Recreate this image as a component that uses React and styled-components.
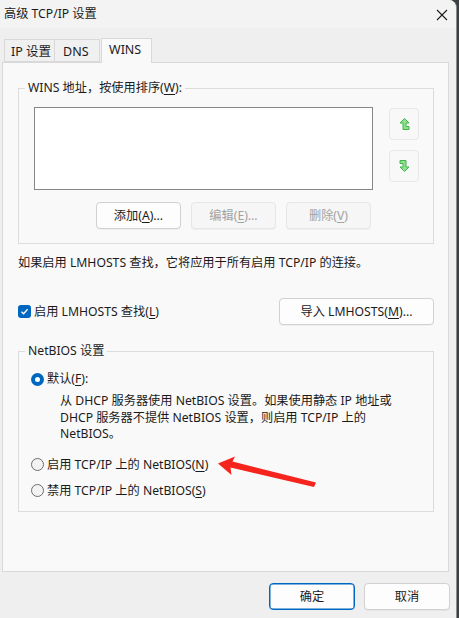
import styled, { createGlobalStyle } from "styled-components";

const GlobalStyle = createGlobalStyle`
  html, body {
    margin: 0;
    padding: 0;
    background: #3b3f46;
    overflow: hidden;
  }
  body {
    font-family: "Noto Sans", "Noto Sans CJK SC", sans-serif;
    font-size: 12.2px;
    color: #1b1b1b;
  }
  u {
    text-underline-offset: 2px;
  }
`;

const Window = styled.div`
  position: relative;
  width: 456px;
  height: 640px;
  background: #efefef;
  border-right: 1px solid #8a8a8a;
  border-top-right-radius: 8px;
  overflow: hidden;
  display: flex;
  flex-direction: column;
`;

const TitleBar = styled.div`
  height: 28px;
  flex: none;
  background: #f3f3f3;
  display: flex;
  align-items: center;
  justify-content: space-between;
  padding: 0 8px 0 4px;
  line-height: 16px;
`;

const CloseButton = styled.span`
  display: flex;
  width: 12px;
  height: 12px;
  margin-top: 1px;
`;

const TabStrip = styled.div`
  display: flex;
  align-items: flex-end;
  height: 24px;
  margin-top: 10px;
  padding-left: 4px;
`;

const Tab = styled.div`
  position: relative;
  box-sizing: border-box;
  width: ${(p) => p.$w}px;
  height: ${(p) => (p.$active ? 25 : 23)}px;
  padding: ${(p) => (p.$active ? "3px 0 0 7px" : `4px 0 0 ${p.$pl || 6}px`)};
  margin-bottom: ${(p) => (p.$active ? -1 : 0)}px;
  margin-left: ${(p) => (p.$active ? 1 : 0)}px;
  background: ${(p) => (p.$active ? "#f9f9f9" : "#f0f0f0")};
  border: 1px solid #d9d9d9;
  border-bottom: ${(p) => (p.$active ? "none" : "1px solid #d9d9d9")};
  border-right: ${(p) => (p.$last || p.$active ? "1px solid #d9d9d9" : "none")};
  z-index: ${(p) => (p.$active ? 2 : 1)};
  line-height: 16px;
  font-size: 12.5px;
`;

const Panel = styled.div`
  box-sizing: border-box;
  width: 447px;
  height: 510px;
  margin-left: 2px;
  background: #f9f9f9;
  border: 1px solid #d9d9d9;
  padding: 0 14px 0 15px;
  display: flex;
  flex-direction: column;
`;

const Group = styled.fieldset`
  margin: ${(p) => p.$top}px 0 0 0;
  padding: 0;
  border: 1px solid #dcdcdc;
  min-width: 0;
`;

const Legend = styled.legend`
  margin-left: 6px;
  padding: 0 3px;
  line-height: 16px;
`;

const GroupBody = styled.div`
  padding: ${(p) => p.$pad};
`;

const WinsGrid = styled.div`
  display: grid;
  grid-template-columns: 339px 30px;
  column-gap: 16px;
  row-gap: 12px;
`;

const ListBox = styled.div`
  height: 83px;
  box-sizing: border-box;
  background: #ffffff;
  border: 1px solid #878787;
`;

const OrderColumn = styled.div`
  display: flex;
  flex-direction: column;
  gap: 10px;
  padding-top: 1px;
`;

const IconButton = styled.div`
  box-sizing: border-box;
  width: 30px;
  height: 32px;
  border: 1px solid #e8e8e8;
  border-radius: 4px;
  background: #f8f8f8;
  display: flex;
  align-items: center;
  justify-content: center;
`;

const ButtonRow = styled.div`
  display: flex;
  justify-content: flex-end;
  gap: 10px;
  padding-right: 2px;
`;

const Button = styled.div`
  box-sizing: border-box;
  width: ${(p) => p.$w || 85}px;
  height: 27px;
  border-radius: 4px;
  display: flex;
  align-items: center;
  justify-content: center;
  line-height: 16px;
  background: ${(p) => (p.$disabled ? "#f6f6f6" : "#fdfdfd")};
  color: ${(p) => (p.$disabled ? "#a2a2a2" : "#1b1b1b")};
  border: 1px solid
    ${(p) => (p.$primary ? "#0067c0" : p.$disabled ? "#e6e6e6" : "#d1d1d1")};
  box-shadow: ${(p) =>
    p.$primary ? "inset 0 0 0 0.5px #0067c0" : "0 1px 0 rgba(0,0,0,0.04)"};
`;

const InfoText = styled.div`
  margin-top: 11px;
  line-height: 16px;
  white-space: nowrap;
`;

const CheckRow = styled.div`
  margin-top: 27px;
  display: flex;
  align-items: center;
  justify-content: space-between;
`;

const CheckLabel = styled.label`
  display: flex;
  align-items: center;
  gap: 3px;
  line-height: 16px;
`;

const CheckBox = styled.span`
  width: 13px;
  height: 13px;
  border-radius: 3px;
  background: #0067c0;
  display: flex;
  align-items: center;
  justify-content: center;
`;

const RadioRow = styled.div`
  display: flex;
  align-items: center;
  gap: 3px;
  line-height: 16px;
  margin-top: ${(p) => p.$top || 0}px;
`;

const Radio = styled.span`
  box-sizing: border-box;
  flex: none;
  width: 13px;
  height: 13px;
  border-radius: 50%;
  display: flex;
  align-items: center;
  justify-content: center;
  background: ${(p) => (p.$checked ? "#0067c0" : "#f3f3f3")};
  border: ${(p) => (p.$checked ? "none" : "1px solid #6e6e6e")};

  &::after {
    content: "";
    display: ${(p) => (p.$checked ? "block" : "none")};
    width: 5px;
    height: 5px;
    border-radius: 50%;
    background: #ffffff;
  }
`;

const Description = styled.div`
  margin-top: 6px;
  padding-left: 29px;
  line-height: 16.5px;
  white-space: nowrap;
`;

const Footer = styled.div`
  display: flex;
  justify-content: flex-end;
  gap: 9px;
  margin-top: 11px;
  padding-right: 6px;
`;

const Callout = styled.svg`
  position: absolute;
  left: 214px;
  top: 452px;
  width: 106px;
  height: 40px;
`;

function UpIcon() {
  return (
    <svg width="11" height="12" viewBox="0 0 11 12">
      <polygon
        points="5.5,0.5 10,5 7,5 7,8.5 10,8.5 10,11.5 4,11.5 4,5 1,5"
        fill="#8fe08f"
        stroke="#41b54b"
        strokeWidth="1"
      />
    </svg>
  );
}

function DownIcon() {
  return (
    <svg width="11" height="12" viewBox="0 0 11 12">
      <polygon
        points="1,0.5 7,0.5 7,7 10,7 5.5,11.5 1,7 4,7 4,3.5 1,3.5"
        fill="#8fe08f"
        stroke="#41b54b"
        strokeWidth="1"
      />
    </svg>
  );
}

export default function App() {
  return (
    <>
      <GlobalStyle />
      <Window>
        <TitleBar>
          <span>高级 TCP/IP 设置</span>
          <CloseButton>
            <svg width="12" height="12" viewBox="0 0 12 12">
              <path d="M1 1 L11 11 M11 1 L1 11" stroke="#1b1b1b" strokeWidth="1.1" />
            </svg>
          </CloseButton>
        </TitleBar>

        <TabStrip>
          <Tab $w={50}>IP 设置</Tab>
          <Tab $w={46} $pl={8} $last>
            DNS
          </Tab>
          <Tab $w={51} $active>
            WINS
          </Tab>
        </TabStrip>

        <Panel>
          <Group $top={17}>
            <Legend>
              WINS 地址，按使用排序(<u>W</u>):
            </Legend>
            <GroupBody $pad="11px 14px 14px 15px">
              <WinsGrid>
                <ListBox />
                <OrderColumn>
                  <IconButton>
                    <UpIcon />
                  </IconButton>
                  <IconButton>
                    <DownIcon />
                  </IconButton>
                </OrderColumn>
                <ButtonRow>
                  <Button>
                    <span>
                      添加(<u>A</u>)...
                    </span>
                  </Button>
                  <Button $disabled>
                    <span>
                      编辑(<u>E</u>)...
                    </span>
                  </Button>
                  <Button $disabled>
                    <span>
                      删除(<u>V</u>)
                    </span>
                  </Button>
                </ButtonRow>
              </WinsGrid>
            </GroupBody>
          </Group>

          <InfoText>如果启用 LMHOSTS 查找，它将应用于所有启用 TCP/IP 的连接。</InfoText>

          <CheckRow>
            <CheckLabel>
              <CheckBox>
                <svg width="9" height="9" viewBox="0 0 9 9">
                  <path d="M1.5 4.8 L3.6 6.8 L7.6 2.2" fill="none" stroke="#fff" strokeWidth="1.3" />
                </svg>
              </CheckBox>
              <span>
                启用 LMHOSTS 查找(<u>L</u>)
              </span>
            </CheckLabel>
            <Button $w={155}>
              <span>
                导入 LMHOSTS(<u>M</u>)...
              </span>
            </Button>
          </CheckRow>

          <Group $top={18}>
            <Legend>NetBIOS 设置</Legend>
            <GroupBody $pad="12px 12px 12px 12px">
              <RadioRow>
                <Radio $checked />
                <span>
                  默认(<u>F</u>):
                </span>
              </RadioRow>
              <Description>
                从 DHCP 服务器使用 NetBIOS 设置。如果使用静态 IP 地址或
                <br />
                DHCP 服务器不提供 NetBIOS 设置，则启用 TCP/IP 上的
                <br />
                NetBIOS。
              </Description>
              <RadioRow $top={14}>
                <Radio />
                <span>
                  启用 TCP/IP 上的 NetBIOS(<u>N</u>)
                </span>
              </RadioRow>
              <RadioRow $top={10}>
                <Radio />
                <span>
                  禁用 TCP/IP 上的 NetBIOS(<u>S</u>)
                </span>
              </RadioRow>
            </GroupBody>
          </Group>
        </Panel>

        <Footer>
          <Button $w={86} $primary>
            确定
          </Button>
          <Button $w={86}>取消</Button>
        </Footer>

        <Callout viewBox="214 452 106 40">
          <polygon
            points="218,463.5 235,456.5 232.5,461.5 316,482.5 314,487 230.5,467.5 231.5,475"
            fill="#f5241c"
          />
        </Callout>
      </Window>
    </>
  );
}
